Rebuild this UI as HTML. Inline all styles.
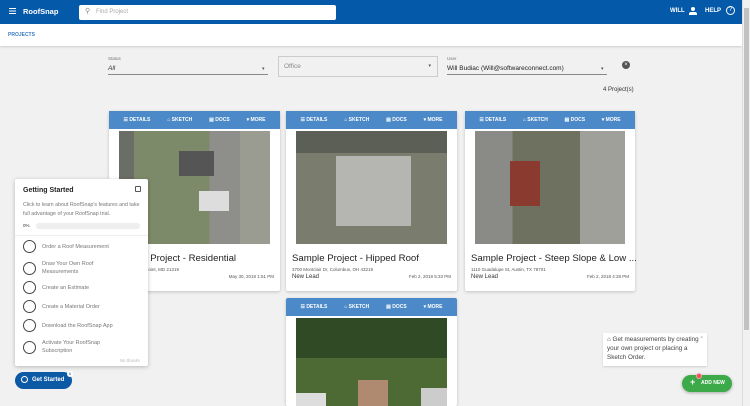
<!DOCTYPE html>
<html><head><style>
*{box-sizing:border-box;margin:0;padding:0}
html,body{width:750px;height:406px;overflow:hidden}
body{background:#f1f1f1;font-family:"Liberation Sans",sans-serif;position:relative}
.hdr{position:absolute;left:0;top:0;width:742px;height:24px;background:#0459a9;color:#fff}
.sub{position:absolute;left:0;top:24px;width:742px;height:22px;background:#fff;box-shadow:0 1px 2px rgba(0,0,0,.15)}
.scroll{position:absolute;left:742px;top:0;width:8px;height:406px;background:#f1f1f1;border-left:1px solid #ddd}
.thumb{position:absolute;left:744px;top:8px;width:5px;height:322px;background:#c1c1c1}
.card{position:absolute;background:#fff;box-shadow:0 1px 3px rgba(0,0,0,.2);border-radius:2px}
.tb{height:18px;background:#4b89c8;color:#fff;font-size:5px;font-weight:bold;display:flex;justify-content:space-around;align-items:center;padding:0 6px}
.img{position:absolute;top:20px;height:113px;left:10px;right:10px;overflow:hidden}
.t{position:absolute;left:6px;top:142px;font-size:9.6px;color:#222;white-space:nowrap}
.a{position:absolute;left:6px;top:156px;font-size:4.5px;color:#555}
.l{position:absolute;left:6px;top:163px;font-size:6px;color:#333}
.d{position:absolute;right:6px;top:163px;font-size:4.5px;color:#555}
.gs{position:absolute;left:15px;top:179px;width:133px;height:187px;background:#fff;box-shadow:0 1px 4px rgba(0,0,0,.25);border-radius:2px}
.it{position:absolute;left:8px;display:flex;align-items:center;font-size:5.5px;color:#777}
.it i{display:inline-block;width:13px;height:13px;border:1.3px solid #444;border-radius:50%;margin-right:6px}
</style></head><body>
<div class="hdr">
<div style="position:absolute;left:9px;top:8px;width:7px;height:1.3px;background:#fff;box-shadow:0 2.5px 0 #fff,0 5px 0 #fff"></div>
<div style="position:absolute;left:23px;top:7px;font-size:7.5px;font-weight:bold">RoofSnap</div>
<div style="position:absolute;left:79px;top:5px;width:257px;height:15px;background:#fff;border-radius:2px;color:#aaa;font-size:6px;padding:4px 0 0 17px">Find Project<span style="position:absolute;left:6px;top:2px;font-size:7px;color:#888">&#9906;</span></div>
<div style="position:absolute;left:670px;top:8px;font-size:6px;font-weight:bold">WILL</div>
<div style="position:absolute;left:691px;top:7px;width:4px;height:4px;border-radius:50%;background:#fff"></div>
<div style="position:absolute;left:689px;top:12px;width:8px;height:3px;background:#fff;border-radius:2px 2px 0 0"></div>
<div style="position:absolute;left:705px;top:8px;font-size:6px;font-weight:bold">HELP</div>
<div style="position:absolute;left:726px;top:6px;width:9px;height:9px;border:1px solid #fff;border-radius:50%;font-size:6px;text-align:center;line-height:7px">?</div>
</div>
<div class="sub"><div style="position:absolute;left:8px;top:8px;font-size:5px;font-weight:bold;color:#3a7cc0">PROJECTS</div></div>
<div style="position:absolute;left:108px;top:56px;font-size:4.5px;color:#777">Status</div>
<div style="position:absolute;left:108px;top:65px;font-size:6.5px;font-style:italic;color:#333">All</div>
<div style="position:absolute;left:262px;top:66px;font-size:5px;color:#555">▾</div>
<div style="position:absolute;left:108px;top:74px;width:160px;height:1px;background:#888"></div>
<div style="position:absolute;left:278px;top:56px;width:160px;height:21px;border:1px solid #ccc;font-size:6.5px;color:#888;padding:6px 5px">Office<span style="position:absolute;right:6px;top:6px;font-size:5px;color:#555">▾</span></div>
<div style="position:absolute;left:447px;top:56px;font-size:4.5px;color:#777">User</div>
<div style="position:absolute;left:447px;top:65px;font-size:6.5px;color:#222">Will Budiac (Will@softwareconnect.com)</div>
<div style="position:absolute;left:601px;top:66px;font-size:5px;color:#555">▾</div>
<div style="position:absolute;left:447px;top:74px;width:160px;height:1px;background:#888"></div>
<div style="position:absolute;left:622px;top:61px;width:8px;height:8px;border-radius:50%;background:#555;color:#fff;font-size:6px;text-align:center;line-height:8px">×</div>
<div style="position:absolute;left:603px;top:87px;font-size:6px;color:#333">4 Project(s)</div>

<div class="card" style="left:109px;top:111px;width:171px;height:180px">
<div class="tb"><span>☰ DETAILS</span><span>⌂ SKETCH</span><span>▤ DOCS</span><span>▾ MORE</span></div>
<div class="img" style="background:linear-gradient(90deg,#6b6e66 0 10%,#7d8a6a 10% 60%,#8e8f8a 60% 80%,#9a9c92 80%)"><div style="position:absolute;left:80px;top:60px;width:30px;height:20px;background:#ddd"></div><div style="position:absolute;left:60px;top:20px;width:35px;height:25px;background:#555"></div></div>
<div class="t">Sample Project - Residential</div><div class="a">Ave, Sparrows Point, MD 21219</div><div class="d">May 30, 2018 1:51 PM</div></div>

<div class="card" style="left:286px;top:111px;width:171px;height:180px">
<div class="tb"><span>☰ DETAILS</span><span>⌂ SKETCH</span><span>▤ DOCS</span><span>▾ MORE</span></div>
<div class="img" style="background:#7a7d6e"><div style="position:absolute;left:40px;top:25px;width:75px;height:70px;background:#b5b5b2"></div><div style="position:absolute;left:0;top:0;right:0;height:22px;background:#5c5f55"></div></div>
<div class="t">Sample Project - Hipped Roof</div><div class="a">3700 Montclair Dr, Columbus, OH 43219</div><div class="l">New Lead</div><div class="d">Feb 2, 2018 5:33 PM</div></div>

<div class="card" style="left:465px;top:111px;width:170px;height:180px">
<div class="tb"><span>☰ DETAILS</span><span>⌂ SKETCH</span><span>▤ DOCS</span><span>▾ MORE</span></div>
<div class="img" style="background:linear-gradient(90deg,#8a8a86 0 25%,#6e7060 25% 70%,#a0a09a 70%)"><div style="position:absolute;left:35px;top:30px;width:30px;height:45px;background:#8b3a30"></div></div>
<div class="t">Sample Project - Steep Slope &amp; Low ...</div><div class="a">1110 Guadalupe St, Austin, TX 78701</div><div class="l">New Lead</div><div class="d">Feb 2, 2018 4:28 PM</div></div>

<div class="card" style="left:286px;top:298px;width:171px;height:108px;overflow:hidden">
<div class="tb"><span>☰ DETAILS</span><span>⌂ SKETCH</span><span>▤ DOCS</span><span>▾ MORE</span></div>
<div class="img" style="background:#4d6a35;height:88px"><div style="position:absolute;left:0;top:0;right:0;height:40px;background:#2f4a25"></div><div style="position:absolute;left:62px;top:62px;width:30px;height:30px;background:#b08a70"></div><div style="position:absolute;left:125px;top:70px;width:30px;height:30px;background:#ccc"></div><div style="position:absolute;left:0;top:75px;width:30px;height:20px;background:#ddd"></div></div></div>

<div class="gs">
<div style="position:absolute;left:8px;top:8px;font-size:7px;font-weight:bold;color:#222">Getting Started</div>
<div style="position:absolute;right:7px;top:7px;width:6px;height:6px;border:1px solid #555;border-radius:1px"></div>
<div style="position:absolute;left:8px;top:22px;font-size:5.3px;color:#777;line-height:8.5px;width:120px">Click to learn about RoofSnap's features and take full advantage of your RoofSnap trial.</div>
<div style="position:absolute;left:8px;top:44px;font-size:4.5px;color:#333">0%</div>
<div style="position:absolute;left:21px;top:44px;width:104px;height:6px;border-radius:3px;background:#eee"></div>
<div style="position:absolute;left:0;top:56px;width:133px;height:1px;background:#eee"></div>
<div class="it" style="top:61px"><i></i>Order a Roof Measurement</div>
<div class="it" style="top:81px"><i></i><span style="line-height:8px">Draw Your Own Roof<br>Measurements</span></div>
<div class="it" style="top:102px"><i></i>Create an Estimate</div>
<div class="it" style="top:121px"><i></i>Create a Material Order</div>
<div class="it" style="top:140px"><i></i>Download the RoofSnap App</div>
<div class="it" style="top:160px"><i></i><span style="line-height:8px">Activate Your RoofSnap<br>Subscription</span></div>
<div style="position:absolute;right:8px;top:179px;font-size:4.5px;font-style:italic;color:#bbb">No thanks</div>
</div>
<div style="position:absolute;left:15px;top:372px;width:57px;height:17px;border-radius:9px;background:#0c5aa6;color:#fff;font-size:6px;font-weight:bold;padding:5px 0 0 17px">Get Started<span style="position:absolute;left:6px;top:4px;width:7px;height:7px;border:1px solid #fff;border-radius:50%"></span></div>
<div style="position:absolute;left:67px;top:371px;width:6px;height:6px;border-radius:50%;background:#fff;color:#0c5aa6;font-size:4px;text-align:center;line-height:6px">6</div>

<div style="position:absolute;left:603px;top:333px;width:104px;height:33px;background:#fff;box-shadow:0 1px 2px rgba(0,0,0,.15);font-size:6.3px;color:#444;line-height:9px;padding:2px 4px">⌂ Get measurements by creating your own project or placing a Sketch Order.<span style="position:absolute;right:4px;top:1px;font-size:5px;color:#aaa">×</span></div>
<div style="position:absolute;left:682px;top:375px;width:50px;height:17px;border-radius:9px;background:#3daa4a;color:#fff;font-size:5px;font-weight:bold;padding:5px 0 0 19px;box-shadow:0 1px 3px rgba(0,0,0,.3)">ADD NEW<span style="position:absolute;left:8px;top:2px;font-size:9px">+</span></div>
<div style="position:absolute;left:696px;top:373px;width:6px;height:6px;border-radius:50%;background:#e8594a;border:1px solid #f9b"></div>
<div class="scroll"></div><div class="thumb"></div>
</body></html>
